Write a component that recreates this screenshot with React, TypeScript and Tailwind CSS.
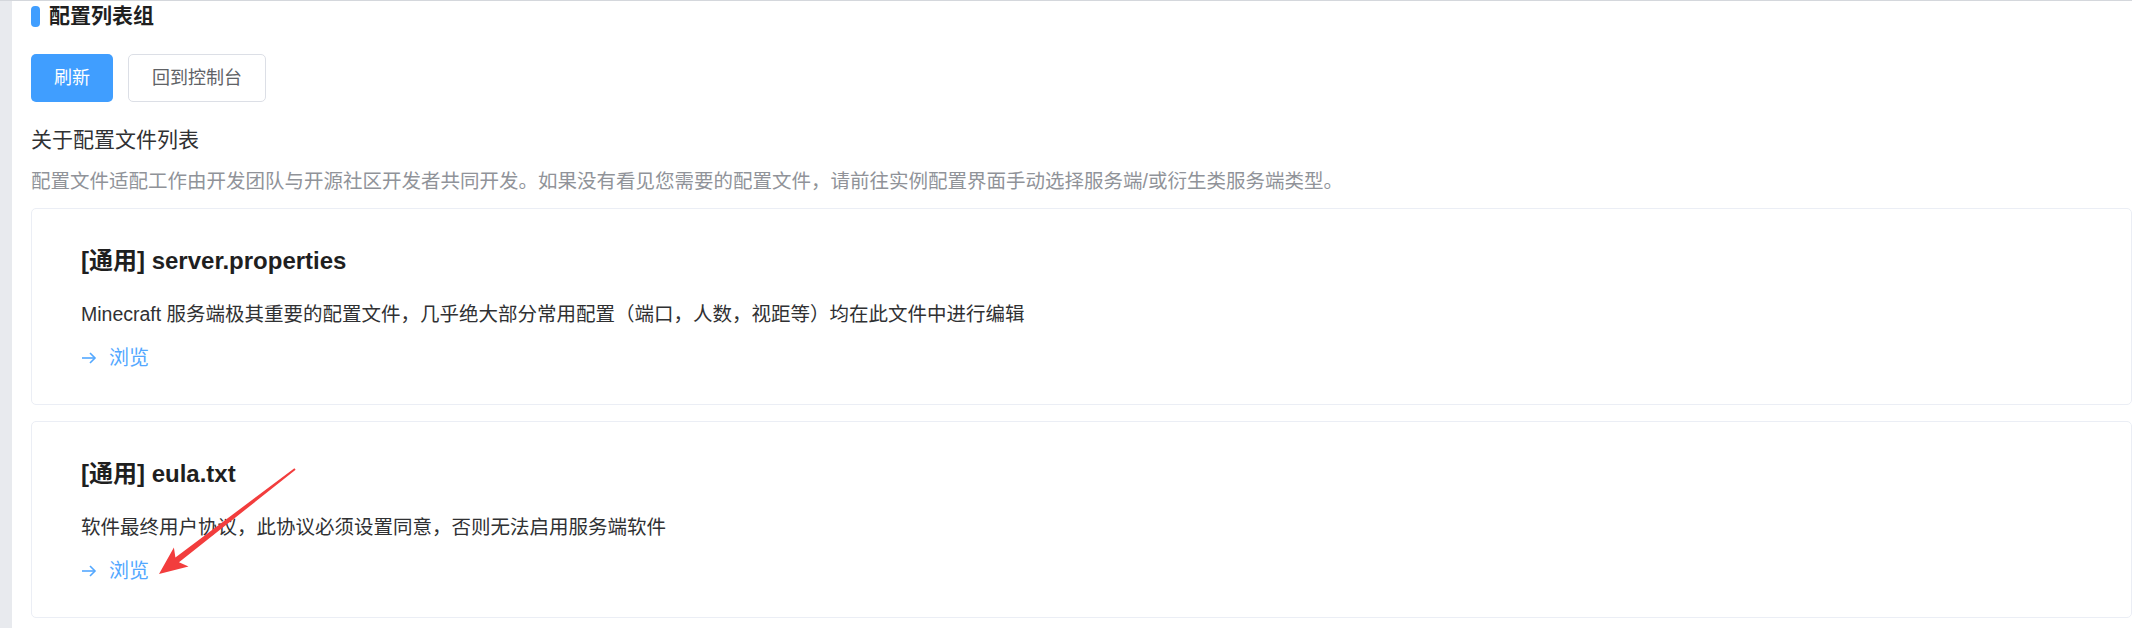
const files = [
  {
    name: "[通用] server.properties",
    desc: "Minecraft 服务端极其重要的配置文件，几乎绝大部分常用配置（端口，人数，视距等）均在此文件中进行编辑",
  },
  {
    name: "[通用] eula.txt",
    desc: "软件最终用户协议，此协议必须设置同意，否则无法启用服务端软件",
  },
];

const font = { fontFamily: "'Liberation Sans', 'Noto Sans CJK SC', sans-serif" };

function RightArrow() {
  return (
    <svg width="16" height="14" viewBox="0 0 16 14" fill="none" stroke="currentColor" strokeWidth="1.6">
      <path d="M1 7h13" />
      <path d="M9 2l5 5-5 5" />
    </svg>
  );
}

function FileCard({ name, desc }: { name: string; desc: string }) {
  return (
    <div className="rounded-[5px] border border-[#ebeef5] bg-white pl-[49px] pt-[36px] pb-[32px]">
      <div className="text-[24px] font-bold leading-[32px] text-[#1f1f1f]">{name}</div>
      <div className="mt-[23px] text-[19.5px] leading-[28px] text-[#303133]">{desc}</div>
      <div className="mt-[16px] flex items-center gap-[12px] text-[20px] leading-[28px] text-[#53a8ff]">
        <RightArrow />
        <span>浏览</span>
      </div>
    </div>
  );
}

export default function App() {
  return (
    <div className="relative flex h-[628px] w-full overflow-hidden border-t border-[#d4d7dc] bg-white" style={font}>
      <div className="w-[12px] shrink-0 bg-[#e8eaee]" />
      <div className="flex min-w-0 flex-1 flex-col pl-[19px] pt-[3px]">
        <div className="flex items-center gap-[9px]">
          <span className="h-[21px] w-[9px] rounded-[4px] bg-[#409eff]" />
          <span className="text-[21px] font-bold leading-[24px] text-[#1f1f1f]">配置列表组</span>
        </div>
        <div className="mt-[26px] flex gap-[15px]">
          <button className="h-[48px] rounded-[5px] bg-[#409eff] px-[23px] text-[18px] text-white">刷新</button>
          <button className="h-[48px] rounded-[5px] border border-[#dcdfe6] bg-white px-[23px] text-[18px] text-[#606266]">
            回到控制台
          </button>
        </div>
        <div className="mt-[24px] text-[21px] leading-[28px] text-[#303133]">关于配置文件列表</div>
        <div className="mt-[13px] text-[19.5px] leading-[28px] text-[#909399]">
          配置文件适配工作由开发团队与开源社区开发者共同开发。如果没有看见您需要的配置文件，请前往实例配置界面手动选择服务端/或衍生类服务端类型。
        </div>
        <div className="mt-[13px] flex flex-col gap-[16px]">
          {files.map((f) => (
            <FileCard key={f.name} name={f.name} desc={f.desc} />
          ))}
        </div>
      </div>
      <svg className="pointer-events-none absolute left-0 top-0" width="2132" height="628">
        <polygon
          points="294.4,467.2 175.4,556.5 173.9,546.4 159,573 188.5,565.4 179,561.3 295.6,468.8"
          fill="#f23d3d"
        />
      </svg>
    </div>
  );
}
